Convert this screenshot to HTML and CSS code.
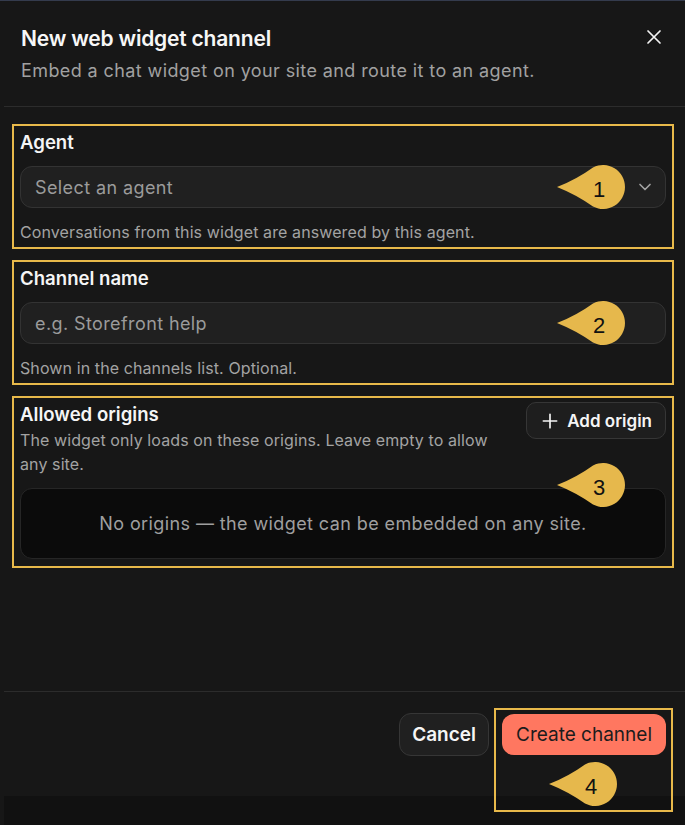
FILE: index.html
```html
<!DOCTYPE html>
<html lang="en">
<head>
<meta charset="utf-8">
<title>New web widget channel</title>
<link rel="stylesheet" href="styles.css">
</head>
<body>
<div class="page">
  <header class="head">
    <div class="head-text">
      <h1 class="title">New web widget channel</h1>
      <p class="subtitle">Embed a chat widget on your site and route it to an agent.</p>
    </div>
    <button class="close" aria-label="Close">
      <svg viewBox="0 0 24 24" width="24" height="24"><path d="M6 6l12 12M18 6L6 18" fill="none" stroke="#f2f2f2" stroke-width="1.7" stroke-linecap="round"/></svg>
    </button>
  </header>
  <div class="divider"></div>

  <main class="body">
    <section class="field ann">
      <div class="label">Agent</div>
      <div class="control select">
        <span class="placeholder">Select an agent</span>
        <svg class="chev" viewBox="0 0 24 24" width="20" height="20"><path d="M6 9l6 6 6-6" fill="none" stroke="#a3a3a3" stroke-width="2" stroke-linecap="round" stroke-linejoin="round"/></svg>
      </div>
      <p class="help">Conversations from this widget are answered by this agent.</p>
      <svg class="pin pin-a" viewBox="0 0 70 46" width="70" height="46"><path d="M2 23Q22 15 38 3.4A22 22 0 1 1 38 42.6Q22 31 2 23Z" fill="#e6b84c"/><text x="44" y="33" class="pin-num">1</text></svg>
    </section>

    <section class="field ann">
      <div class="label">Channel name</div>
      <div class="control input">
        <span class="placeholder">e.g. Storefront help</span>
      </div>
      <p class="help">Shown in the channels list. Optional.</p>
      <svg class="pin pin-a" viewBox="0 0 70 46" width="70" height="46"><path d="M2 23Q22 15 38 3.4A22 22 0 1 1 38 42.6Q22 31 2 23Z" fill="#e6b84c"/><text x="44" y="33" class="pin-num">2</text></svg>
    </section>

    <section class="field ann origins">
      <div class="origins-head">
        <div class="origins-text">
          <div class="label">Allowed origins</div>
          <p class="desc">The widget only loads on these origins. Leave empty to allow any site.</p>
        </div>
        <button class="btn-add">
          <svg viewBox="0 0 24 24" width="20" height="20"><path d="M12 4v16M4 12h16" fill="none" stroke="#f5f5f5" stroke-width="2" stroke-linecap="round"/></svg>
          <span>Add origin</span>
        </button>
      </div>
      <div class="empty">No origins — the widget can be embedded on any site.</div>
      <svg class="pin pin-c" viewBox="0 0 70 46" width="70" height="46"><path d="M2 23Q22 15 38 3.4A22 22 0 1 1 38 42.6Q22 31 2 23Z" fill="#e6b84c"/><text x="44" y="33" class="pin-num">3</text></svg>
    </section>
  </main>

  <div class="divider"></div>
  <footer class="foot">
    <button class="btn-cancel">Cancel</button>
    <div class="create-wrap">
      <button class="btn-create">Create channel</button>
      <span class="ann-box"></span>
      <svg class="pin pin-d" viewBox="0 0 70 46" width="70" height="46"><path d="M2 23Q22 15 38 3.4A22 22 0 1 1 38 42.6Q22 31 2 23Z" fill="#e6b84c"/><text x="44" y="33" class="pin-num">4</text></svg>
    </div>
  </footer>
  <div class="band"></div>
</div>
</body>
</html>
```

FILE: styles.css
```css
* { box-sizing: border-box; }

html, body {
  margin: 0;
  padding: 0;
  background: #171717;
}

body {
  font-family: Inter, "Noto Sans", "Liberation Sans", sans-serif;
  color: #f2f2f2;
}

.page {
  height: 825px;
  display: flex;
  flex-direction: column;
  border-top: 1px solid #343b4d;
  overflow: hidden;
}

.head {
  display: flex;
  justify-content: space-between;
  align-items: flex-start;
  padding: 24px 19px 23px 21px;
  flex: none;
}

.title {
  margin: 0;
  font-size: 21px;
  line-height: 28px;
  font-weight: 600;
  letter-spacing: -0.2px;
  color: #f7f7f7;
}

.subtitle {
  margin: 6px 0 0;
  font-size: 18px;
  line-height: 24px;
  letter-spacing: 0.4px;
  color: #a1a1a1;
}

.close {
  width: 24px;
  height: 24px;
  padding: 0;
  border: 0;
  background: transparent;
  display: flex;
}

.divider {
  height: 1px;
  margin-left: 4px;
  background: #2c2c2c;
  flex: none;
}

.body {
  flex: 1;
  padding: 17px 11px 0 12px;
  display: flex;
  flex-direction: column;
  gap: 11px;
}

.field {
  position: relative;
  padding: 4px 6px 5px;
}

.ann {
  border: 2px solid #e8b94a;
}

.label {
  font-size: 18.6px;
  line-height: 24px;
  font-weight: 600;
  color: #f5f5f5;
}

.control {
  margin-top: 12px;
  height: 42px;
  border: 1px solid #333333;
  border-radius: 12px;
  background: #202020;
  display: flex;
  align-items: center;
  justify-content: space-between;
  padding: 0 10px 0 14px;
}

.placeholder {
  font-size: 18px;
  letter-spacing: 0.4px;
  color: #9b9b9b;
}

.chev { display: block; }

.help {
  margin: 14px 0 0;
  font-size: 16px;
  line-height: 20px;
  letter-spacing: 0.1px;
  color: #a3a3a3;
}

.origins { padding-bottom: 7px; }

.origins-head {
  display: flex;
  align-items: flex-start;
  gap: 16px;
}

.origins-text { flex: 1; }

.desc {
  margin: 2px 0 0;
  font-size: 16px;
  line-height: 24px;
  letter-spacing: 0.1px;
  color: #a3a3a3;
}

.btn-add {
  flex: none;
  height: 37px;
  display: flex;
  align-items: center;
  gap: 7px;
  padding: 0 13px;
  border: 1px solid #363636;
  border-radius: 10px;
  background: #1e1e1e;
  color: #f5f5f5;
  font-family: inherit;
  font-size: 17px;
  font-weight: 600;
}

.btn-add svg { display: block; }

.empty {
  margin-top: 12px;
  height: 71px;
  border: 1px solid #262626;
  border-radius: 12px;
  background: #0b0b0b;
  display: flex;
  align-items: center;
  justify-content: center;
  font-size: 18px;
  letter-spacing: 0.4px;
  color: #9f9f9f;
}

.pin {
  position: absolute;
  display: block;
  overflow: visible;
}

.pin-num {
  font-family: "Liberation Sans", Arial, sans-serif;
  font-size: 22px;
  fill: #111111;
  text-anchor: middle;
}

.pin-a { left: 541px; top: 38px; }
.pin-c { left: 541px; top: 64px; }
.pin-d { left: 45px; top: 47px; }

.foot {
  display: flex;
  justify-content: flex-end;
  align-items: flex-start;
  gap: 13px;
  padding: 21px 19px 0 0;
  height: 104px;
  flex: none;
}

.btn-cancel {
  height: 43px;
  padding: 0 12px;
  border: 1px solid #363636;
  border-radius: 12px;
  background: #202020;
  color: #f5f5f5;
  font-family: inherit;
  font-size: 19px;
  font-weight: 600;
}

.create-wrap {
  position: relative;
  margin-top: 1px;
}

.btn-create {
  display: block;
  height: 41px;
  padding: 0 14px;
  border: 0;
  border-radius: 12px;
  background: #ff7760;
  color: #1c1c1c;
  font-family: inherit;
  font-size: 19px;
}

.ann-box {
  position: absolute;
  left: -8px;
  top: -6px;
  width: 179px;
  height: 104px;
  border: 2px solid #e8b94a;
}

.band {
  height: 29px;
  flex: none;
  margin-left: 4px;
  background: #111111;
}
```
